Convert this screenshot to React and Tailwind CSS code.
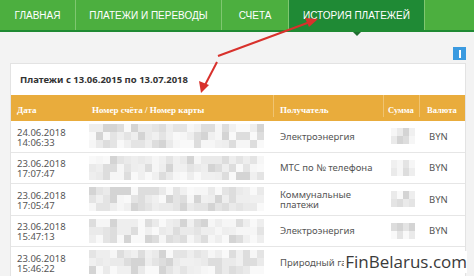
import React from 'react';

const tabs = [
  { label: 'ГЛАВНАЯ', w: 'w-[76px]' },
  { label: 'ПЛАТЕЖИ И ПЕРЕВОДЫ', w: 'w-[146px]' },
  { label: 'СЧЕТА', w: 'w-[67px]' },
  { label: 'ИСТОРИЯ ПЛАТЕЖЕЙ', w: 'w-[136px]', active: true },
];

const rows = [
  { date: '24.06.2018', time: '14:06:33', to: ['Электроэнергия'], cur: 'BYN' },
  { date: '23.06.2018', time: '17:07:47', to: ['МТС по № телефона'], cur: 'BYN' },
  { date: '23.06.2018', time: '17:05:47', to: ['Коммунальные', 'платежи'], cur: 'BYN' },
  { date: '23.06.2018', time: '15:47:13', to: ['Электроэнергия'], cur: 'BYN' },
  { date: '23.06.2018', time: '15:46:22', to: ['Природный га'], cur: '' },
];

const shades = ['#f6f6f6', '#f0f0f0', '#eaeaea', '#e4e4e4', '#dddddd', '#d4d4d4', '#f9f9f9', '#eeeeee'];

// deterministic pseudo-random shade for the blurred mosaic
const shade = (r, c, seed) => {
  const v = Math.abs(Math.sin(r * 12.9898 + c * 78.233 + seed * 3.17) * 43758.5453);
  return shades[Math.floor((v - Math.floor(v)) * shades.length)];
};

const Mosaic = ({ cols, rowsN, seed, cell = 7 }) => (
  <div className="flex flex-col">
    {Array.from({ length: rowsN }).map((_, r) => (
      <div key={r} className="flex">
        {Array.from({ length: cols }).map((_, c) => (
          <div
            key={c}
            className="h-[8px]"
            style={{ width: cell, backgroundColor: shade(r, c, seed) }}
          />
        ))}
      </div>
    ))}
  </div>
);

export default function App() {
  return (
    <div className="relative w-[474px] h-[276px] overflow-hidden bg-[#f3f3f3] font-['Noto_Sans',sans-serif]">
      {/* Nav */}
      <div className="relative flex h-[32px] bg-[#4caf3f] border-b-2 border-[#1f8a33]">
        {tabs.map((t) => (
          <div
            key={t.label}
            className={`${t.w} relative flex items-center justify-center border-r border-[#7fc770] text-white text-[10px] font-['Liberation_Sans',Arial,sans-serif] ${t.active ? 'bg-[#1f8a35]' : ''}`}
          >
            {t.label}
            {t.active && (
              <div className="absolute left-1/2 -translate-x-1/2 -bottom-[6px] w-0 h-0 border-l-[4px] border-r-[4px] border-t-[4px] border-l-transparent border-r-transparent border-t-[#1f6f30]" />
            )}
          </div>
        ))}
        <div className="flex-1" />
      </div>

      {/* Toolbar strip */}
      <div className="h-[31px] flex items-end justify-end pr-[8px] pb-[3px]">
        <div className="w-[13px] h-[13px] bg-[#3a9ae0] flex items-center justify-center">
          <div className="w-[2px] h-[8px] bg-white" />
        </div>
      </div>

      {/* Panel */}
      <div className="ml-[10px] w-[456px] bg-white border-t border-x border-[#e3e3e3]">
        <div className="h-[31px] flex items-center pl-[9px] pt-[2px] text-[9.5px] font-bold text-[#333]">
          Платежи с 13.06.2015 по 13.07.2018
        </div>

        {/* Header */}
        <div className="flex h-[26px] bg-[#e9ac3c] text-white text-[9px] font-bold font-['Liberation_Serif',serif] items-end pb-[4px]">
          <div className="w-[75px] pl-[6px]">Дата</div>
          <div className="w-[188px] pl-[6px] border-r border-[#f0c472] h-full flex items-end">Номер счёта / Номер карты</div>
          <div className="w-[110px] pl-[6px] border-r border-[#f0c472] h-full flex items-end">Получатель</div>
          <div className="w-[36px] pl-[4px] border-r border-[#f0c472] h-full flex items-end whitespace-nowrap text-[8.5px]">Сумма</div>
          <div className="flex-1 pl-[7px] text-[8.5px]">Валюта</div>
        </div>

        {/* Rows */}
        {rows.map((r, i) => (
          <div key={i} className="flex h-[31.5px] border-b border-[#e6e6e6] text-[9.5px] text-[#555] leading-[10px]">
            <div className="w-[78px] pl-[6px] flex items-center pt-[3px]">
              <span>
                {r.date}
                <br />
                {r.time}
              </span>
            </div>
            <div className="w-[185px] flex items-center">
              <Mosaic cols={25} rowsN={3} seed={i + 1} />
            </div>
            <div className="w-[110px] pl-[6px] flex items-center pt-[1px]">
              <span>
                {r.to.map((l, k) => (
                  <React.Fragment key={l}>
                    {k > 0 && <br />}
                    {l}
                  </React.Fragment>
                ))}
              </span>
            </div>
            <div className="w-[36px] pl-[7px] flex items-center">
              {r.cur && <Mosaic cols={4} rowsN={2} seed={i + 9} cell={6} />}
            </div>
            <div className="flex-1 pl-[9px] flex items-center pt-[1px]">{r.cur}</div>
          </div>
        ))}
      </div>

      {/* Annotation arrows */}
      <svg className="absolute inset-0 pointer-events-none" width="474" height="276">
        <line x1="218" y1="56" x2="310" y2="22" stroke="#d8312c" strokeWidth="2" />
        <polygon points="318,19 305,18 309,27" fill="#d8312c" />
        <line x1="217" y1="62" x2="205" y2="85" stroke="#d8312c" strokeWidth="2" />
        <polygon points="201,93 199,81 209,85" fill="#d8312c" />
      </svg>

      {/* Watermark */}
      <div className="absolute right-[7px] bottom-[3px] pl-[1px] bg-white text-[17px] leading-[22px] text-[#3a3a3a] font-['Open_Sans',sans-serif]">
        FinBelarus.com
      </div>
    </div>
  );
}
